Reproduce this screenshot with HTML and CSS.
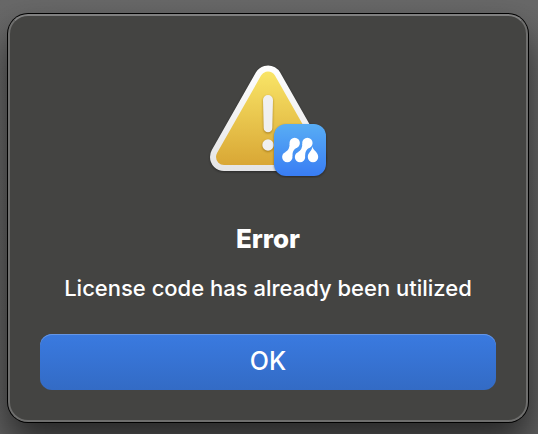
FILE: index.html
```
<!doctype html>
<html lang="en">
<head>
	<meta charset="utf-8">
	<title>Error</title>
	<meta name="viewport" content="width=device-width, initial-scale=1">
	<link rel="stylesheet" href="styles.css">
</head>
<body>
	<main class="dialog" role="alertdialog" aria-labelledby="title" aria-describedby="message">
		<svg class="icon" viewBox="0 0 120 114" aria-hidden="true">
			<defs>
				<linearGradient id="rim" gradientUnits="userSpaceOnUse" x1="0" y1="0" x2="0" y2="108">
					<stop offset="0" stop-color="#ffffff"/>
					<stop offset="1" stop-color="#e4e4e5"/>
				</linearGradient>
				<linearGradient id="yellow" gradientUnits="userSpaceOnUse" x1="0" y1="7" x2="0" y2="101">
					<stop offset="0" stop-color="#f9e567"/>
					<stop offset="1" stop-color="#d9a735"/>
				</linearGradient>
				<linearGradient id="blue" x1="0" y1="0" x2="0" y2="1">
					<stop offset="0" stop-color="#58adf4"/>
					<stop offset="1" stop-color="#397df4"/>
				</linearGradient>
			</defs>
			<!-- warning triangle -->
			<g class="triangle" stroke-linejoin="round">
				<path d="M60 15.5 L104 93 H16 Z" fill="url(#rim)" stroke="url(#rim)" stroke-width="28"/>
				<path d="M60 15.5 L104 93 H16 Z" fill="url(#yellow)" stroke="url(#yellow)" stroke-width="16"/>
			</g>
			<g class="mark" fill="#f0f0f0">
				<path d="M55 36 a5 5 0 0 1 10 0 L64.3 64 a4.3 4.3 0 0 1 -8.6 0 Z"/>
				<circle cx="60" cy="81" r="5.7"/>
			</g>
			<!-- app badge -->
			<g class="badge">
				<rect x="66" y="60" width="52" height="52" rx="12" fill="url(#blue)"/>
				<g fill="#fff">
					<g id="blob">
						<circle cx="79.3" cy="93" r="5.2"/>
						<circle cx="86.7" cy="79" r="5.2"/>
						<path d="M77 88.3 Q82 85.5 81.6 79.8 L88.9 83.6 Q84 86.5 84.4 92.1 Z"/>
					</g>
					<use href="#blob" x="12.7"/>
					<path d="M104.2 82.6 C105 86.5 110.2 88 110.2 93 A5.2 5.2 0 0 1 99.8 93 C99.8 88.5 104.2 87.5 104.2 82.6 Z"/>
				</g>
			</g>
		</svg>
		<h1 id="title">Error</h1>
		<p id="message">License code has already been utilized</p>
		<button class="ok" type="button">OK</button>
	</main>
</body>
</html>
```
FILE: styles.css
```
* {
	box-sizing: border-box;
}
html {
	min-height: 100%;
	background: linear-gradient(#686868, #606060);
}
body {
	margin: 0px;
	padding: 14px 10px 12px 8px;
	font-family: Inter, 'Liberation Sans', sans-serif;
	color: white;
}
.dialog {
	display: flex;
	flex-direction: column;
	align-items: center;
	padding: 48px 30px 30px;
	background: #444442;
	border: 2px solid #6e6e6d;
	border-top-color: #808080;
	border-radius: 20px;
	box-shadow: 0px 0px 0px 1px black, 0px 20px 36px rgba(0, 0, 0, 0.6);
}
.icon {
	width: 120px;
	height: 114px;
}
.triangle {
	filter: drop-shadow(0px 1px 1px rgba(0, 0, 0, 0.4));
}
.mark {
	filter: drop-shadow(0px 1px 1px rgba(120, 80, 0, 0.6));
}
.badge rect {
	filter: drop-shadow(0px 1px 1px rgba(0, 0, 0, 0.4));
}
h1 {
	margin: 44px 0px 0px;
	font-size: 26px;
	line-height: 34px;
	font-weight: 800;
}
p {
	margin: 18px 0px 0px;
	font-size: 22px;
	line-height: 28px;
	font-weight: 500;
	text-align: center;
}
.ok {
	width: 100%;
	height: 56px;
	margin-top: 32px;
	padding: 0px 0px 2px;
	border: none;
	border-radius: 12px;
	background: linear-gradient(#3a7ae0, #336bc5);
	box-shadow: inset 0px 1px 0px #6596e6;
	color: white;
	font-family: inherit;
	font-size: 25px;
	line-height: 32px;
	font-weight: 500;
}
.ok:active {
	background: #2c5fb3;
}
```
